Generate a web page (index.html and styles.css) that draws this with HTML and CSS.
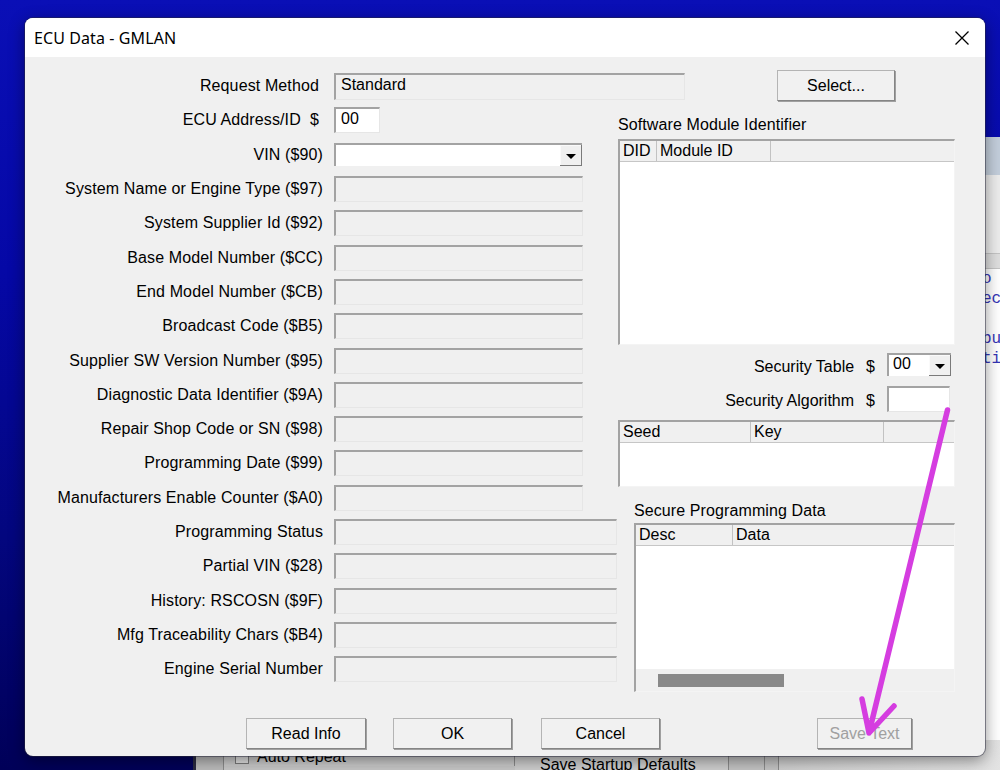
FILE: index.html
```html
<!DOCTYPE html>
<html lang="en">
<head>
  <meta charset="UTF-8">
  <title>ECU Data - GMLAN</title>
  <link rel="stylesheet" href="styles.css">
</head>
<body>
<div class="desktop">

  <!-- editor window behind the dialog -->
  <div class="app-window">
    <div class="app-title"></div>
    <div class="app-toolbar"></div>
    <div class="app-ruler"></div>
    <div class="app-editor">
      <div class="code-line">o t</div>
      <div class="code-line">ec</div>
      <div class="code-line"></div>
      <div class="code-line">bu</div>
      <div class="code-line">ti</div>
    </div>
    <div class="app-bottom">
      <div class="cell cell-edge"></div>
      <div class="cell cell-check"><span class="checkbox"></span>Auto Repeat</div>
      <div class="cell cell-save">Save Startup Defaults</div>
      <div class="cell cell-a"></div>
      <div class="cell cell-b"></div>
      <div class="cell cell-rest"></div>
    </div>
  </div>

  <!-- ECU data dialog -->
  <div class="dialog">
    <div class="title-bar">
      <span class="title">ECU Data - GMLAN</span>
      <svg class="close" width="14" height="14" viewBox="0 0 14 14">
        <path d="M0.5 0.5 L13.5 13.5 M13.5 0.5 L0.5 13.5" stroke="#000" stroke-width="1.3" fill="none"/>
      </svg>
    </div>

    <div class="dialog-body">
      <div class="columns">

        <div class="form-grid">
          <label class="tight">Request Method</label>
          <div class="field w-req h27">Standard</div>

          <label class="tight">ECU Address/ID&nbsp; $</label>
          <div class="field white w-id">00</div>

          <label>VIN ($90)</label>
          <div class="combo w-vin"><span class="combo-text"></span><span class="drop"><i></i></span></div>

          <label>System Name or Engine Type ($97)</label>
          <div class="field w-mid"></div>

          <label>System Supplier Id ($92)</label>
          <div class="field w-mid"></div>

          <label>Base Model Number ($CC)</label>
          <div class="field w-mid"></div>

          <label>End Model Number ($CB)</label>
          <div class="field w-mid"></div>

          <label>Broadcast Code ($B5)</label>
          <div class="field w-mid"></div>

          <label>Supplier SW Version Number ($95)</label>
          <div class="field w-mid"></div>

          <label>Diagnostic Data Identifier ($9A)</label>
          <div class="field w-mid"></div>

          <label>Repair Shop Code or SN ($98)</label>
          <div class="field w-mid"></div>

          <label>Programming Date ($99)</label>
          <div class="field w-mid"></div>

          <label>Manufacturers Enable Counter ($A0)</label>
          <div class="field w-mid"></div>

          <label>Programming Status</label>
          <div class="field w-long"></div>

          <label>Partial VIN ($28)</label>
          <div class="field w-long"></div>

          <label>History: RSCOSN ($9F)</label>
          <div class="field w-long"></div>

          <label>Mfg Traceability Chars ($B4)</label>
          <div class="field w-long"></div>

          <label>Engine Serial Number</label>
          <div class="field w-long"></div>
        </div>

        <div class="side">
          <button class="btn btn-select">Select...</button>

          <div class="group-label">Software Module Identifier</div>
          <div class="list list-modules">
            <div class="list-head">
              <span class="col" style="width:37px">DID</span>
              <span class="col" style="width:114px">Module ID</span>
            </div>
          </div>

          <div class="inline-row row-table">
            <span>Security Table</span><span class="dollar">$</span>
            <div class="combo w-sec"><span class="combo-text">00</span><span class="drop"><i></i></span></div>
          </div>
          <div class="inline-row row-algo">
            <span>Security Algorithm</span><span class="dollar">$</span>
            <div class="field white w-algo"></div>
          </div>

          <div class="list list-seed">
            <div class="list-head">
              <span class="col" style="width:131px">Seed</span>
              <span class="col" style="width:133px">Key</span>
            </div>
          </div>

          <div class="group-label sub">Secure Programming Data</div>
          <div class="list list-secure">
            <div class="list-head">
              <span class="col" style="width:97px">Desc</span>
              <span class="col col-open">Data</span>
            </div>
            <div class="list-space"></div>
            <div class="hscroll"><span class="thumb"></span></div>
          </div>
        </div>

      </div>

      <div class="buttons">
        <button class="btn btn-read">Read Info</button>
        <button class="btn btn-ok">OK</button>
        <button class="btn btn-cancel">Cancel</button>
        <button class="btn btn-save" disabled>Save Text</button>
      </div>
    </div>
  </div>

  <!-- hand drawn marker arrow -->
  <svg class="annotation" width="1000" height="770" viewBox="0 0 1000 770">
    <path d="M947.5 410 L869 733 M862 699 L869 733 L894 706" stroke="#d53de0" stroke-width="5.5" stroke-linecap="round" stroke-linejoin="round" fill="none"/>
  </svg>

</div>
</body>
</html>
```

FILE: styles.css
```css
body {
  margin: 0;
  font-family: "Liberation Sans", Arial, sans-serif;
  font-size: 16px;
  color: #000;
}

.desktop {
  position: relative;
  width: 1000px;
  height: 770px;
  overflow: hidden;
  background: linear-gradient(180deg, #0a0fb6 0%, #0508a6 35%, #03067e 70%, #000058 100%);
}

/* ---------- background editor window ---------- */

.app-window {
  position: absolute;
  left: 193px;
  top: 137px;
  width: 820px;
  height: 660px;
  display: flex;
  flex-direction: column;
  background: #fff;
  border-left: 3px solid #2a2a40;
}

.app-title {
  height: 38px;
  background: #c3cedb;
}

.app-toolbar {
  height: 78px;
  background: #ececec;
}

.app-ruler {
  height: 14px;
  background: #dedede;
  border-top: 1px solid #c4c4c4;
  border-bottom: 1px solid #c4c4c4;
}

.app-editor {
  height: 471px;
  background: #fff;
  padding-left: 786px;
  font-family: "Liberation Mono", "Courier New", monospace;
  font-size: 16px;
  color: #3535b5;
}

.code-line {
  height: 20px;
  line-height: 20px;
  white-space: pre;
}

.app-bottom {
  flex: 1;
  display: flex;
  background: #c8c8c8;
  font-size: 16px;
}

.cell {
  border-right: 1px solid #8c8c8c;
  padding-top: 9px;
  line-height: 18px;
  white-space: nowrap;
}

.cell-edge { width: 27px; background: #bcbcbc; }

.cell-check {
  width: 279px;
  display: flex;
  align-items: center;
  align-self: flex-start;
  height: 18px;
  padding-top: 8px;
  padding-left: 11px;
  background: #cdcdcd;
}

.checkbox {
  width: 12px;
  height: 12px;
  border: 1px solid #7c7c7c;
  background: #e4e4e4;
  margin-right: 8px;
}

.cell-save {
  width: 188px;
  padding-left: 25px;
  padding-top: 16px;
  background: #cfcfcf;
}

.cell-a { width: 35px; background: #c4c4c4; }
.cell-b { width: 13px; background: #c4c4c4; }
.cell-rest { flex: 1; border: none; background: linear-gradient(90deg, #d0d0d0, #e4e4e4); }

/* ---------- dialog ---------- */

.dialog {
  position: absolute;
  left: 25px;
  top: 18px;
  width: 960px;
  height: 738px;
  display: flex;
  flex-direction: column;
  background: #f0f0f0;
  border-radius: 8px;
  overflow: hidden;
  box-shadow: 0 0 0 1px rgba(40, 40, 60, 0.5), 0 4px 16px rgba(0, 0, 0, 0.45);
}

.title-bar {
  height: 39px;
  flex-shrink: 0;
  background: #fff;
  display: flex;
  align-items: center;
  justify-content: space-between;
  padding: 0 16px 0 9px;
}

.title {
  font-family: "Noto Sans", "Open Sans", sans-serif;
  font-size: 16px;
  letter-spacing: 0.1px;
}

.close {
  display: block;
}

.dialog-body {
  flex: 1;
  padding-top: 12px;
}

.columns {
  display: flex;
}

.form-grid {
  width: 593px;
  flex-shrink: 0;
  display: grid;
  grid-template-columns: 298px auto;
  grid-auto-rows: 34.3px;
  column-gap: 11px;
  align-items: center;
  justify-items: start;
}

.form-grid label {
  justify-self: end;
  white-space: nowrap;
  letter-spacing: 0.12px;
}

.form-grid label.tight {
  margin-right: 4px;
}

/* sunken edit boxes */
.field {
  box-sizing: border-box;
  height: 26px;
  background: #f0f0f0;
  border-top: 2px solid #a3a3a3;
  border-left: 2px solid #a3a3a3;
  border-right: 1px solid #e6e6e6;
  border-bottom: 1px solid #e6e6e6;
  padding: 1px 5px;
  line-height: 18px;
  white-space: nowrap;
  overflow: hidden;
}

.field.white { background: #fff; }
.h27 { height: 27px; }

.w-req { width: 351px; }
.w-id { width: 46px; }
.w-mid { width: 249px; }
.w-long { width: 283px; }
.w-algo { width: 63px; }

.combo {
  box-sizing: border-box;
  height: 23px;
  display: flex;
  background: #fff;
  border-top: 2px solid #a3a3a3;
  border-left: 2px solid #a3a3a3;
}

.w-vin { width: 248px; }
.w-sec { width: 64px; }

.combo-text {
  flex: 1;
  padding-left: 4px;
  line-height: 17px;
}

.drop {
  width: 22px;
  background: #f0f0f0;
  box-shadow: inset -1px -1px 0 #7a7a7a, inset 1px 1px 0 #fafafa;
  display: flex;
  align-items: center;
  justify-content: center;
}

.drop i {
  width: 0;
  height: 0;
  border-left: 5px solid transparent;
  border-right: 5px solid transparent;
  border-top: 5px solid #000;
  margin-top: 1px;
}

/* right column */
.side {
  width: 337px;
  display: flex;
  flex-direction: column;
}

.btn {
  font-family: "Liberation Sans", Arial, sans-serif;
  font-size: 16px;
  color: #000;
  height: 31px;
  padding: 0;
  background: #f1f1f1;
  border: 1px solid #b4b4b4;
  border-right-color: #858585;
  border-bottom-color: #858585;
  box-shadow: 1px 1px 0 #a0a0a0;
  box-sizing: border-box;
}

.btn-select {
  align-self: flex-end;
  width: 118px;
  margin: 1px 60px 0 0;
}

.group-label {
  margin-top: 15px;
  line-height: 18px;
  white-space: nowrap;
  letter-spacing: 0.1px;
}

.group-label.sub {
  margin-top: 15px;
  margin-left: 16px;
}

.list {
  box-sizing: border-box;
  background: #fff;
  border-top: 2px solid #a3a3a3;
  border-left: 2px solid #a3a3a3;
  border-right: 1px solid #f4f4f4;
  border-bottom: 1px solid #f4f4f4;
  display: flex;
  flex-direction: column;
}

.list-head {
  display: flex;
  height: 21px;
  flex-shrink: 0;
  background: #f0f0f0;
  border-bottom: 1px solid #c6c6c6;
  box-sizing: border-box;
}

.col {
  box-sizing: border-box;
  padding-left: 3px;
  line-height: 20px;
  border-right: 1px solid #c2c2c2;
  white-space: nowrap;
}

.col-open {
  flex: 1;
  border-right: none;
}

.list-modules {
  margin-top: 5px;
  height: 206px;
}

.inline-row {
  display: flex;
  align-items: center;
  justify-content: flex-end;
  padding-right: 4px;
  white-space: nowrap;
}

.inline-row > span {
  position: relative;
  top: 2px;
}

.dollar {
  margin: 0 12px 0 12px;
}

.row-table {
  margin-top: 8px;
}

.row-algo {
  margin-top: 10px;
  padding-right: 5px;
}

.list-seed {
  margin-top: 8px;
  height: 67px;
}

.list-secure {
  margin-top: 3px;
  margin-left: 16px;
  height: 169px;
}

.list-space {
  flex: 1;
}

.hscroll {
  height: 22px;
  background: #f0f0f0;
  display: flex;
  align-items: center;
  padding-left: 22px;
}

.thumb {
  width: 126px;
  height: 13px;
  background: #898989;
}

/* bottom buttons */
.buttons {
  display: flex;
  margin-top: 26px;
  padding-left: 221px;
}

.btn-read { width: 120px; }
.btn-ok { width: 119px; margin-left: 27px; }
.btn-cancel { width: 119px; margin-left: 29px; }
.btn-save { width: 95px; margin-left: 157px; color: #a0a0a0; }

.annotation {
  position: absolute;
  left: 0;
  top: 0;
  pointer-events: none;
}
```
